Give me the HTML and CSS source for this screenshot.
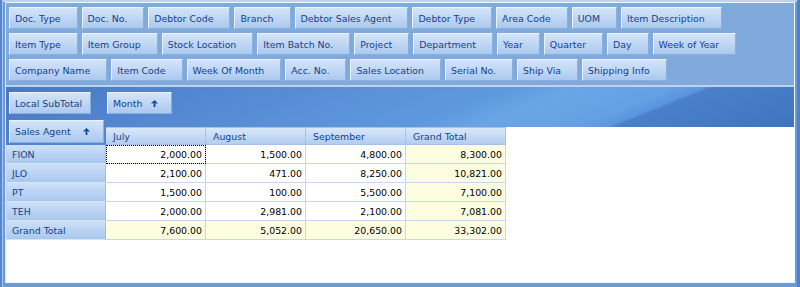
FILE: index.html
```html
<!DOCTYPE html>
<html>
<head>
<meta charset="utf-8">
<link rel="stylesheet" href="styles.css">
</head>
<body>
<div class="frame">
  <div class="panel">
    <div class="fields">
      <div class="field-row">
        <span class="fbtn">Doc. Type</span>
        <span class="fbtn">Doc. No.</span>
        <span class="fbtn">Debtor Code</span>
        <span class="fbtn">Branch</span>
        <span class="fbtn">Debtor Sales Agent</span>
        <span class="fbtn">Debtor Type</span>
        <span class="fbtn">Area Code</span>
        <span class="fbtn">UOM</span>
        <span class="fbtn">Item Description</span>
      </div>
      <div class="field-row">
        <span class="fbtn">Item Type</span>
        <span class="fbtn">Item Group</span>
        <span class="fbtn">Stock Location</span>
        <span class="fbtn">Item Batch No.</span>
        <span class="fbtn">Project</span>
        <span class="fbtn">Department</span>
        <span class="fbtn">Year</span>
        <span class="fbtn">Quarter</span>
        <span class="fbtn">Day</span>
        <span class="fbtn">Week of Year</span>
      </div>
      <div class="field-row">
        <span class="fbtn">Company Name</span>
        <span class="fbtn">Item Code</span>
        <span class="fbtn">Week Of Month</span>
        <span class="fbtn">Acc. No.</span>
        <span class="fbtn">Sales Location</span>
        <span class="fbtn">Serial No.</span>
        <span class="fbtn">Ship Via</span>
        <span class="fbtn">Shipping Info</span>
      </div>
    </div>
    <div class="pivot">
      <div class="data-area"><span class="fbtn pbtn">Local SubTotal</span></div>
      <div class="col-area"><span class="fbtn pbtn sort">Month <svg class="arrow" viewBox="0 0 7 7" width="7" height="7"><path d="M3.5 0 L7 3.6 L5.2 3.6 L4.4 2.8 L4.4 7 L2.6 7 L2.6 2.8 L1.8 3.6 L0 3.6 Z" fill="#15428b"/></svg></span></div>
      <div class="row-area"><span class="fbtn pbtn sort wide">Sales Agent <svg class="arrow" viewBox="0 0 7 7" width="7" height="7"><path d="M3.5 0 L7 3.6 L5.2 3.6 L4.4 2.8 L4.4 7 L2.6 7 L2.6 2.8 L1.8 3.6 L0 3.6 Z" fill="#15428b"/></svg></span></div>

      <div class="ch">July</div>
      <div class="ch">August</div>
      <div class="ch">September</div>
      <div class="ch">Grand Total</div>
      <div class="ch-fill"></div>

      <div class="rh">FION</div>
      <div class="c focus">2,000.00</div>
      <div class="c">1,500.00</div>
      <div class="c">4,800.00</div>
      <div class="c gt">8,300.00</div>

      <div class="rh">JLO</div>
      <div class="c">2,100.00</div>
      <div class="c">471.00</div>
      <div class="c">8,250.00</div>
      <div class="c gt">10,821.00</div>

      <div class="rh">PT</div>
      <div class="c">1,500.00</div>
      <div class="c">100.00</div>
      <div class="c">5,500.00</div>
      <div class="c gt">7,100.00</div>

      <div class="rh">TEH</div>
      <div class="c">2,000.00</div>
      <div class="c">2,981.00</div>
      <div class="c">2,100.00</div>
      <div class="c gt">7,081.00</div>

      <div class="rh">Grand Total</div>
      <div class="c gt">7,600.00</div>
      <div class="c gt">5,052.00</div>
      <div class="c gt">20,650.00</div>
      <div class="c gt">33,302.00</div>
    </div>
  </div>
</div>
</body>
</html>
```

FILE: styles.css
```css
html, body {
  margin: 0;
  padding: 0;
}

.frame {
  box-sizing: border-box;
  width: 800px;
  height: 287px;
  padding: 2px 5px 4px 5px;
  background: #6b9ad8;
  box-shadow: inset 2px 0 0 #5586cf, inset 3px 0 0 #a9c6ee, inset -3px 0 0 #4f81c9, inset 0 2px 0 #bcd4f2;
}

.panel {
  box-sizing: border-box;
  height: 100%;
  background: #ffffff;
  border: 1px solid #f2f7fe;
  border-left-color: #dce8f8;
}

.fields {
  display: flex;
  flex-direction: column;
  gap: 4px;
  padding: 4px 3px;
  background: #7faadb;
  border-bottom: 2px solid #bcd2ef;
}

.field-row {
  display: flex;
  gap: 4px;
}

.fbtn {
  box-sizing: border-box;
  height: 22px;
  display: inline-flex;
  align-items: center;
  padding: 0 16px 0 5px;
  background: linear-gradient(#d4e4f8, #abc9ef);
  border: 1px solid;
  border-color: #eaf2fd #8aaede #8aaede #eaf2fd;
  color: #15428b;
  font: 9.4px "DejaVu Sans", sans-serif;
  white-space: nowrap;
}

.pivot {
  display: grid;
  grid-template-columns: repeat(5, 100px) 1fr;
  grid-template-rows: 30px 10px 18px repeat(5, 19px);
  background: #ffffff linear-gradient(158deg, #4778c4 0px, #5589d2 90px, #5f99dd 190px, #6aa6e6 214px, #64a0e3 250px, #5b96dd 262px, #4a80ca 265px, #3d70bc 349px) top left / 100% 58px no-repeat;
  font: 9.4px "DejaVu Sans", sans-serif;
}

.data-area {
  grid-column: 1;
  grid-row: 1;
  padding: 5px 0 0 3px;
}

.col-area {
  grid-column: 2 / 7;
  grid-row: 1 / 3;
  padding: 5px 0 0 1px;
}

.row-area {
  grid-column: 1;
  grid-row: 2 / 4;
  padding: 3px 0 0 3px;
}

.pbtn {
  padding-right: 8px;
}

.sort {
  gap: 9px;
  padding-right: 13px;
}

.wide {
  width: 95px;
  height: 23px;
  justify-content: space-between;
}

.arrow {
  display: block;
}

.ch {
  grid-row: 3;
  box-sizing: border-box;
  display: flex;
  align-items: center;
  padding-left: 7px;
  background: linear-gradient(#d9e8fa, #b3cdf0);
  border-top: 1px solid #a6c2ea;
  border-right: 1px solid #a6c2ea;
  border-bottom: 1px solid #a6c2ea;
  color: #15428b;
}

.ch-fill {
  grid-row: 3;
  background: #ffffff;
}

.rh {
  grid-column: 1;
  box-sizing: border-box;
  display: flex;
  align-items: center;
  padding-left: 5px;
  background: linear-gradient(#cde0f7, #a9c7ee);
  border-left: 1px solid #bcd2ef;
  border-right: 1px solid #9fbde6;
  border-bottom: 1px solid #d8e5f7;
  color: #15428b;
}

.c {
  box-sizing: border-box;
  display: flex;
  align-items: center;
  justify-content: flex-end;
  padding-right: 3px;
  background: #ffffff;
  border-right: 1px solid #c5d7f0;
  border-bottom: 1px solid #c5d7f0;
  color: #000000;
}

.gt {
  background: #fdfde2;
}

.focus {
  outline: 1px dotted #000000;
  outline-offset: -1px;
}
```
